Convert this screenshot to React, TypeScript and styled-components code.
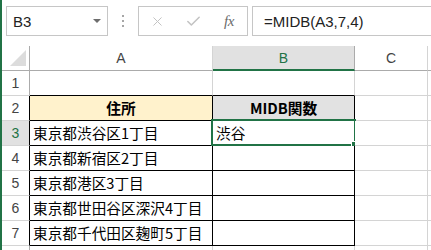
import React from 'react';
import styled, { createGlobalStyle } from 'styled-components';
import { X, Check } from 'lucide-react';

const GlobalStyle = createGlobalStyle`
  html, body { margin: 0; padding: 0; background: #fff; overflow: hidden; }
`;

const GREEN = '#217346';
const GRID = '#d4d4d4';
const HEAD = '#ababab';

const Window = styled.div`
  width: 431px;
  height: 250px;
  box-sizing: border-box;
  border-left: 2px solid ${GREEN};
  display: flex;
  flex-direction: column;
  overflow: hidden;
  font-family: "Liberation Sans", "Noto Sans CJK JP", sans-serif;
`;

const FormulaBar = styled.div`
  display: flex;
  align-items: flex-start;
  height: 46px;
  flex: none;
  box-sizing: border-box;
  padding: 6px 0 0 4px;
`;

const NameBox = styled.div`
  width: 102px;
  height: 30px;
  box-sizing: border-box;
  border: 1px solid #c6c6c6;
  display: flex;
  align-items: center;
  justify-content: space-between;
  padding: 0 6px 0 6px;
  font-size: 15px;
  color: #222;
`;

const Arrow = styled.span`
  width: 0;
  height: 0;
  border-left: 4px solid transparent;
  border-right: 4px solid transparent;
  border-top: 4px solid #6d6d6d;
`;

const Dots = styled.div`
  width: 30px;
  height: 30px;
  display: flex;
  flex-direction: column;
  align-items: center;
  justify-content: center;
  gap: 3px;
  span {
    width: 2px;
    height: 2px;
    background: #a6a6a6;
  }
`;

const EditBox = styled.div`
  width: 110px;
  height: 30px;
  box-sizing: border-box;
  border: 1px solid #c6c6c6;
  display: grid;
  grid-template-columns: 37px 35px 1fr;
  align-items: center;
  justify-items: center;
  color: #c3c3c3;
`;

const Fx = styled.span`
  font-family: "Liberation Serif", serif;
  font-style: italic;
  font-size: 15px;
  color: #6b6b6b;
  letter-spacing: -0.5px;
`;

const FormulaBox = styled.div`
  flex: 1;
  height: 30px;
  margin-left: 4px;
  box-sizing: border-box;
  border: 1px solid #c6c6c6;
  border-right: none;
  display: flex;
  align-items: center;
  padding-left: 11px;
  font-size: 15px;
  color: #222;
`;

const Sheet = styled.div`
  display: grid;
  grid-template-columns: 28px 183px 142px 73px 1fr;
  grid-auto-rows: 25px;
`;

const Corner = styled.div`
  position: relative;
  box-sizing: border-box;
  border-right: 1px solid ${HEAD};
  border-bottom: 1px solid ${HEAD};
  svg { position: absolute; left: 8px; bottom: 4px; }
`;

const ColHead = styled.div<{ $active?: boolean }>`
  box-sizing: border-box;
  display: flex;
  align-items: center;
  justify-content: center;
  font-size: 14px;
  color: ${(p) => (p.$active ? GREEN : '#444')};
  background: ${(p) => (p.$active ? '#e1e1e1' : '#fff')};
  border-right: 1px solid ${(p) => (p.$active ? HEAD : GRID)};
  border-bottom: ${(p) => (p.$active ? `2px solid ${GREEN}` : `1px solid ${HEAD}`)};
`;

const RowHead = styled.div<{ $active?: boolean; $edge?: string }>`
  box-sizing: border-box;
  display: flex;
  align-items: center;
  justify-content: center;
  font-size: 14px;
  color: ${(p) => (p.$active ? GREEN : '#444')};
  background: ${(p) => (p.$active ? '#e1e1e1' : '#fff')};
  border-right: 1px solid ${(p) => p.$edge || HEAD};
  border-bottom: 1px solid ${GRID};
`;

const Cell = styled.div<{ $r?: string; $b?: string; $bg?: string; $head?: boolean }>`
  position: relative;
  box-sizing: border-box;
  display: flex;
  align-items: center;
  justify-content: ${(p) => (p.$head ? 'center' : 'flex-start')};
  padding-left: ${(p) => (p.$head ? '0' : '3px')};
  padding-top: 1px;
  font-family: "Noto Sans CJK JP", "Liberation Sans", sans-serif;
  font-size: 14.67px;
  font-weight: ${(p) => (p.$head ? 700 : 400)};
  line-height: 1;
  color: #000;
  white-space: nowrap;
  background: ${(p) => p.$bg || '#fff'};
  border-right: 1px solid ${(p) => p.$r || GRID};
  border-bottom: 1px solid ${(p) => p.$b || GRID};
`;

const Selection = styled.div`
  position: absolute;
  left: -2px;
  top: -2px;
  right: -2px;
  bottom: -1px;
  border: 2px solid ${GREEN};
  pointer-events: none;
  &::after {
    content: '';
    position: absolute;
    right: -4px;
    bottom: -4px;
    width: 5px;
    height: 5px;
    background: ${GREEN};
    border: 1px solid #fff;
  }
`;

const addresses = [
  '東京都渋谷区1丁目',
  '東京都新宿区2丁目',
  '東京都港区3丁目',
  '東京都世田谷区深沢4丁目',
  '東京都千代田区麹町5丁目',
];

const App: React.FC = () => {
  return (
    <Window>
      <GlobalStyle />
      <FormulaBar>
        <NameBox>
          <span>B3</span>
          <Arrow />
        </NameBox>
        <Dots>
          <span />
          <span />
          <span />
        </Dots>
        <EditBox>
          <X size={15} strokeWidth={1.6} />
          <Check size={17} strokeWidth={2.2} />
          <Fx>fx</Fx>
        </EditBox>
        <FormulaBox>=MIDB(A3,7,4)</FormulaBox>
      </FormulaBar>

      <Sheet>
        <Corner>
          <svg width="16" height="16" viewBox="0 0 16 16">
            <polygon points="0,16 16,16 16,0" fill="#dcdcdc" />
          </svg>
        </Corner>
        <ColHead>A</ColHead>
        <ColHead $active>B</ColHead>
        <ColHead>C</ColHead>
        <ColHead />

        {/* 1行目 */}
        <RowHead>1</RowHead>
        <Cell $b="#000" />
        <Cell $b="#000" />
        <Cell />
        <Cell />

        {/* 2行目 見出し */}
        <RowHead $edge="#000">2</RowHead>
        <Cell $head $bg="#fff2cc" $r="#000" $b="#000">住所</Cell>
        <Cell $head $bg="#e2e2e2" $r="#000" $b="#000">MIDB関数</Cell>
        <Cell />
        <Cell />

        {addresses.map((addr, i) => (
          <React.Fragment key={i}>
            <RowHead $active={i === 0} $edge="#000">{i + 3}</RowHead>
            <Cell $r="#000" $b="#000">{addr}</Cell>
            <Cell $r="#000" $b="#000">
              {i === 0 ? '渋谷' : ''}
              {i === 0 ? <Selection /> : null}
            </Cell>
            <Cell />
            <Cell />
          </React.Fragment>
        ))}

        {/* 8行目は下端で切れて番号は見えない */}
        <RowHead />
        <Cell />
        <Cell />
        <Cell />
        <Cell />
      </Sheet>
    </Window>
  );
};

export default App;
